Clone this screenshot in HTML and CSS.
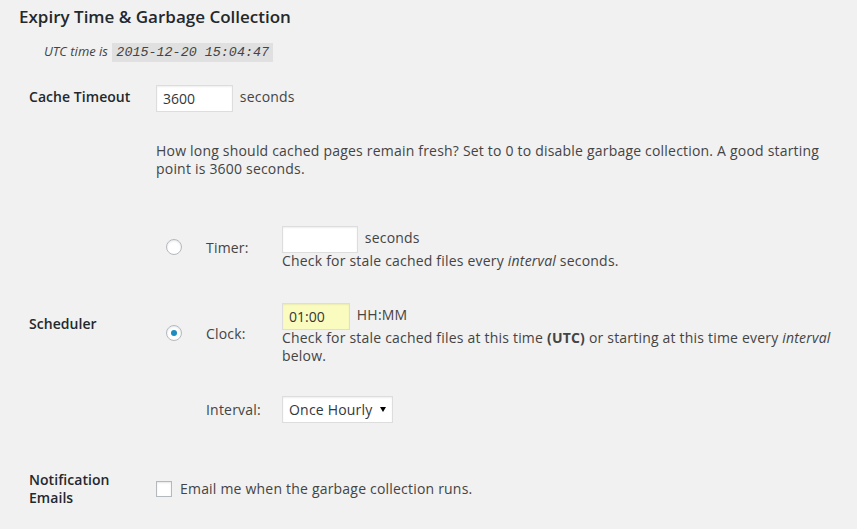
FILE: index.html
```html
<!DOCTYPE html>
<html lang="en">
<head>
  <meta charset="UTF-8">
  <title>Expiry Time &amp; Garbage Collection</title>
  <link rel="stylesheet" href="styles.css">
</head>
<body>
  <div class="wrap">
    <h3>Expiry Time &amp; Garbage Collection</h3>
    <p class="utc"><em>UTC time is <code>2015-12-20 15:04:47</code></em></p>

    <div class="form-table">
      <div class="row row-timeout">
        <label class="th" for="cache-max-time">Cache Timeout</label>
        <div class="td">
          <div class="field"><input type="text" id="cache-max-time" class="small-text w77" value="3600"> seconds</div>
          <p class="description">How long should cached pages remain fresh? Set to 0 to disable garbage collection. A good starting point is 3600 seconds.</p>
        </div>
      </div>

      <div class="row row-scheduler">
        <div class="th">Scheduler</div>
        <div class="td">
          <div class="schedule">
            <div class="cell"><input type="radio" name="cache_schedule_type" value="interval"></div>
            <div class="cell lbl">Timer:</div>
            <div class="cell">
              <div class="field"><input type="text" class="small-text w76" value=""> seconds</div>
              <div class="hint">Check for stale cached files every <em>interval</em> seconds.</div>
            </div>

            <div class="cell"><input type="radio" name="cache_schedule_type" value="time" checked></div>
            <div class="cell lbl">Clock:</div>
            <div class="cell">
              <div class="field"><input type="text" class="small-text w68 autofilled" value="01:00"> HH:MM</div>
              <div class="hint">Check for stale cached files at this time <strong>(UTC)</strong> or starting at this time every <em>interval</em> below.</div>
            </div>

            <div class="cell"></div>
            <div class="cell lbl">Interval:</div>
            <div class="cell">
              <span class="select-wrap">
                <select name="cache_scheduled_interval">
                  <option selected>Once Hourly</option>
                  <option>Twice Daily</option>
                  <option>Once Daily</option>
                </select>
              </span>
            </div>
          </div>
        </div>
      </div>

      <div class="row row-notify">
        <div class="th">Notification Emails</div>
        <div class="td">
          <label class="check"><input type="checkbox" name="cache_gc_email_me"> Email me when the garbage collection runs.</label>
        </div>
      </div>
    </div>
  </div>
</body>
</html>
```

FILE: styles.css
```css
body {
  background: #f1f1f1;
  margin: 0;
  font-family: "Open Sans", "Liberation Sans", sans-serif;
  font-size: 14px;
  color: #444;
}
.wrap {
  padding: 0 20px 0 19px;
}
h3 {
  color: #23282d;
  font-size: 17px;
  font-weight: 600;
  line-height: 24px;
  margin: 5px 0 0 0;
}
.utc {
  margin: 12px 0 0 25px;
  font-size: 13px;
  line-height: 20px;
}
.utc code {
  font-family: "Liberation Mono", monospace;
  font-size: 13.4px;
  background: rgba(0,0,0,0.07);
  padding: 2px 4px 2px 4px;
  margin-left: 1px;
}

/* settings rows: label column + control column */
.form-table { margin-top: 20px; }
.row {
  display: grid;
  grid-template-columns: 127px 1fr;
  padding-left: 10px;
}
.th {
  color: #23282d;
  font-weight: 600;
  line-height: 18px;
  letter-spacing: 0.05px;
}
.td { letter-spacing: 0.2px; }
.row-timeout .th { line-height: 27px; }
.row-scheduler { margin-top: 46px; align-items: center; }
.row-notify { margin-top: 48px; align-items: center; }
.row-notify .th { padding-right: 10px; }

.field { line-height: 28px; height: 28px; }
input.small-text {
  box-sizing: border-box;
  height: 27px;
  padding: 2px 6px;
  border: 1px solid #ddd;
  box-shadow: inset 0 1px 2px rgba(0,0,0,0.07);
  background: #fff;
  color: #32373c;
  font-family: inherit;
  font-size: 14px;
  margin: 0 3px 0 0;
  vertical-align: middle;
  outline: none;
}
.w77 { width: 77px; }
.w76 { width: 76px; }
.w68 { width: 68px; }
input.autofilled { background: #fafcbf; }

.description {
  margin: 31px 0 0 0;
  line-height: 18px;
  color: #444;
}

/* nested radio / label / control table */
.schedule {
  display: grid;
  grid-template-columns: 40px 76px 1fr;
  row-gap: 31px;
  align-items: center;
  margin-left: 10px;
}
.hint { line-height: 18px; margin-top: 0; }
.lbl { color: #444; }

input[type=radio], input[type=checkbox] {
  -webkit-appearance: none;
  appearance: none;
  width: 16px;
  height: 16px;
  margin: 0;
  border: 1px solid #b4b9be;
  background: #fff;
  box-shadow: inset 0 1px 2px rgba(0,0,0,0.1);
  box-sizing: border-box;
  vertical-align: middle;
  position: relative;
}
input[type=radio] { border-radius: 50%; display: block; }
input[type=radio]:checked::before {
  content: "";
  position: absolute;
  left: 4px;
  top: 4px;
  width: 6px;
  height: 6px;
  border-radius: 50%;
  background: #1e8cbe;
}

.select-wrap {
  position: relative;
  display: inline-block;
}
.select-wrap::after {
  content: "";
  position: absolute;
  right: 7px;
  top: 11px;
  border-left: 3px solid transparent;
  border-right: 3px solid transparent;
  border-top: 5px solid #000;
  pointer-events: none;
}
select {
  -webkit-appearance: none;
  appearance: none;
  box-sizing: border-box;
  width: 111px;
  height: 27px;
  padding: 0 6px;
  border: 1px solid #ddd;
  background: #fff;
  color: #32373c;
  font-family: inherit;
  font-size: 14px;
  letter-spacing: 0.2px;
  border-radius: 0;
  box-shadow: inset 0 1px 2px rgba(0,0,0,0.07);
  display: block;
}

.check { display: flex; align-items: center; line-height: 18px; }
.check input { margin-right: 8px; }
```
